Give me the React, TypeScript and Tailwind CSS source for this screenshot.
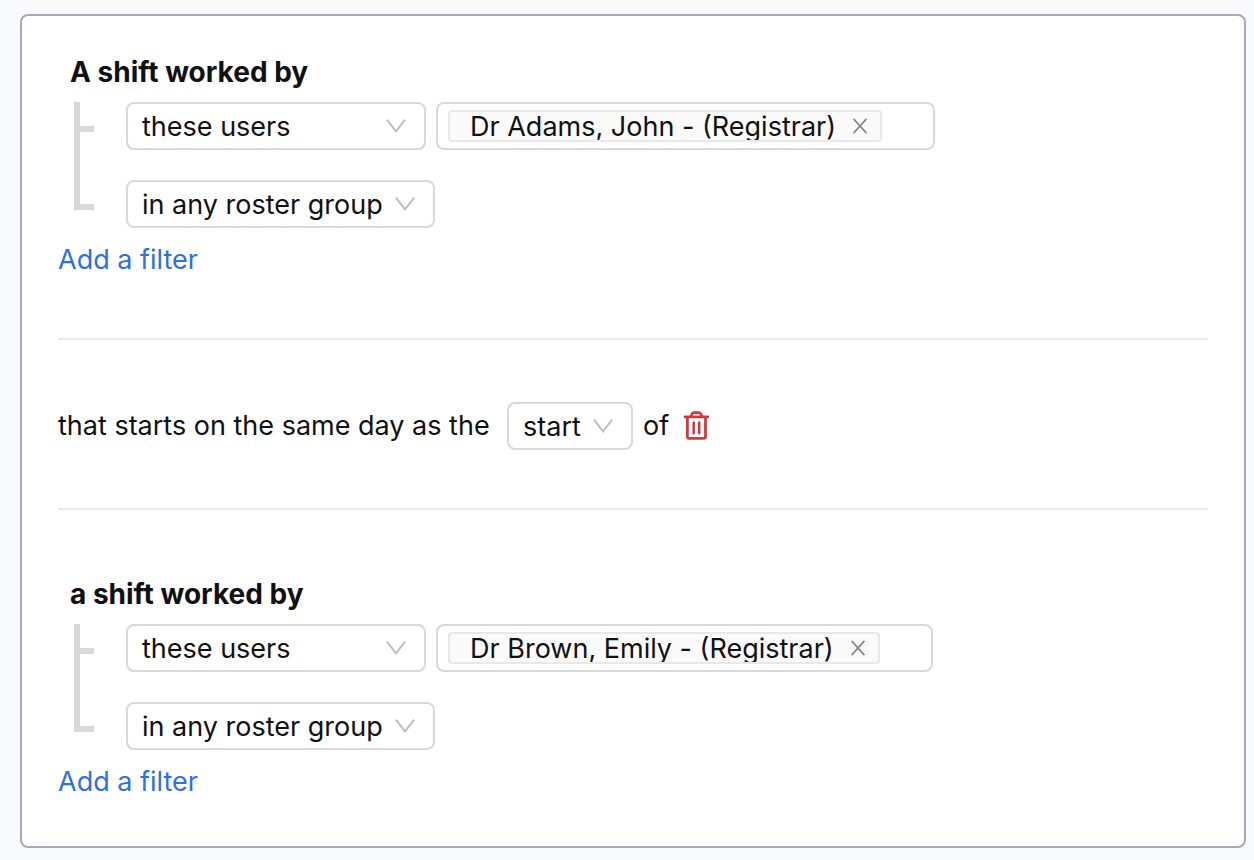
import { useId, useState } from "react";

function Chevron() {
  return (
    <svg
      aria-hidden="true"
      viewBox="0 0 20 14"
      className="pointer-events-none absolute right-5 top-[17px] h-[14px] w-5"
      fill="none"
      stroke="#bfbfbf"
      strokeWidth="2"
    >
      <path d="M0.9 0.6 L10 12.4 L19.1 0.6" />
    </svg>
  );
}

function Select({ id, label, value, width }: { id?: string; label?: string; value: string; width: string }) {
  return (
    <div className={`relative shrink-0 ${width}`}>
      <select
        id={id}
        aria-label={label}
        className="block h-12 w-full appearance-none rounded-lg border-2 border-[#d9d9d9] bg-white pl-[14px] pr-6 pt-px outline-none"
      >
        <option>{value}</option>
      </select>
      <Chevron />
    </div>
  );
}

function UserPicker({ initial }: { initial: string }) {
  const [user, setUser] = useState<string | null>(initial);
  return (
    <div className="flex h-12 items-center rounded-lg border-2 border-[#d9d9d9] bg-white pl-[10px] pr-[51px]">
      {user && (
        <span className="flex h-8 items-center overflow-hidden rounded-sm border-2 border-[#e8e8e8] bg-[#fafafa] pl-5 pr-3">
          <span className="whitespace-nowrap pt-[2px]">{user}</span>
          <button
            type="button"
            aria-label={`Remove ${user}`}
            onClick={() => setUser(null)}
            className="ml-4 flex h-7 items-center"
          >
            <svg viewBox="0 0 16 16" className="size-4" fill="none" stroke="#8c8c8c" strokeWidth="1.8">
              <path d="M1.6 0.8 L14.4 15.2 M14.4 0.8 L1.6 15.2" />
            </svg>
          </button>
        </span>
      )}
    </div>
  );
}

function Branch() {
  return (
    <div aria-hidden="true" className="ml-4 mr-8 w-5 shrink-0 border-l-6 border-[#d9d9d9]">
      <div className="h-[30px] border-b-6 border-[#d9d9d9]" />
    </div>
  );
}

function ShiftBlock({ title, user }: { title: string; user: string }) {
  return (
    <section>
      <h2 className="mb-2 pl-3 text-[28px] font-bold leading-[44px]">{title}</h2>
      <div className="flex">
        <Branch />
        <div className="flex gap-[10px] pb-[30px]">
          <Select label="Worked by" value="these users" width="w-[300px]" />
          <UserPicker initial={user} />
        </div>
      </div>
      <div className="flex h-12 items-start">
        <Branch />
        <Select label="Roster group" value="in any roster group" width="w-[309px]" />
      </div>
      <a href="#add-filter" className="mt-[10px] inline-block text-[#2f6fe0]">
        Add a filter
      </a>
    </section>
  );
}

function TrashIcon() {
  return (
    <svg viewBox="0 0 26 30" className="h-[30px] w-[26px]" fill="none" stroke="#cf3a3f">
      <path d="M1.9 5.8 H25" strokeWidth="2.7" strokeLinecap="round" />
      <path d="M7.8 5.4 L9.2 2.6 Q9.7 1.6 10.8 1.6 H16 Q17.1 1.6 17.6 2.6 L19 5.4" strokeWidth="2.6" />
      <path d="M4.4 6 V25.8 Q4.4 27.4 6 27.4 H20.9 Q22.5 27.4 22.5 25.8 V6" strokeWidth="2.8" />
      <path d="M10.7 11.4 V22.2 M16.2 11.4 V22.2" strokeWidth="2.5" strokeLinecap="round" />
    </svg>
  );
}

export default function App() {
  const boundaryId = useId();
  return (
    <main className="min-h-screen bg-[#f9fafc] pb-3 pl-5 pr-2 pt-[14px] font-[Inter,'Liberation_Sans',sans-serif] text-[27px] leading-[44px] text-[#111]">
      <div className="rounded-lg border-2 border-[#a9a9bb] bg-white px-9 pb-[42px] pt-[34px]">
        <ShiftBlock title="A shift worked by" user="Dr Adams, John - (Registrar)" />
        <div className="mb-[62px] mt-14 flex items-center gap-[10px] whitespace-nowrap border-y-2 border-[#e8e8e8] pb-[58px] pt-[62px]">
          <label htmlFor={boundaryId} className="min-w-[439px]">
            that starts on the same day as the
          </label>
          <Select id={boundaryId} value="start" width="w-[126px]" />
          <span>of</span>
          <button type="button" aria-label="Delete condition" className="ml-1">
            <TrashIcon />
          </button>
        </div>
        <ShiftBlock title="a shift worked by" user="Dr Brown, Emily - (Registrar)" />
      </div>
    </main>
  );
}
